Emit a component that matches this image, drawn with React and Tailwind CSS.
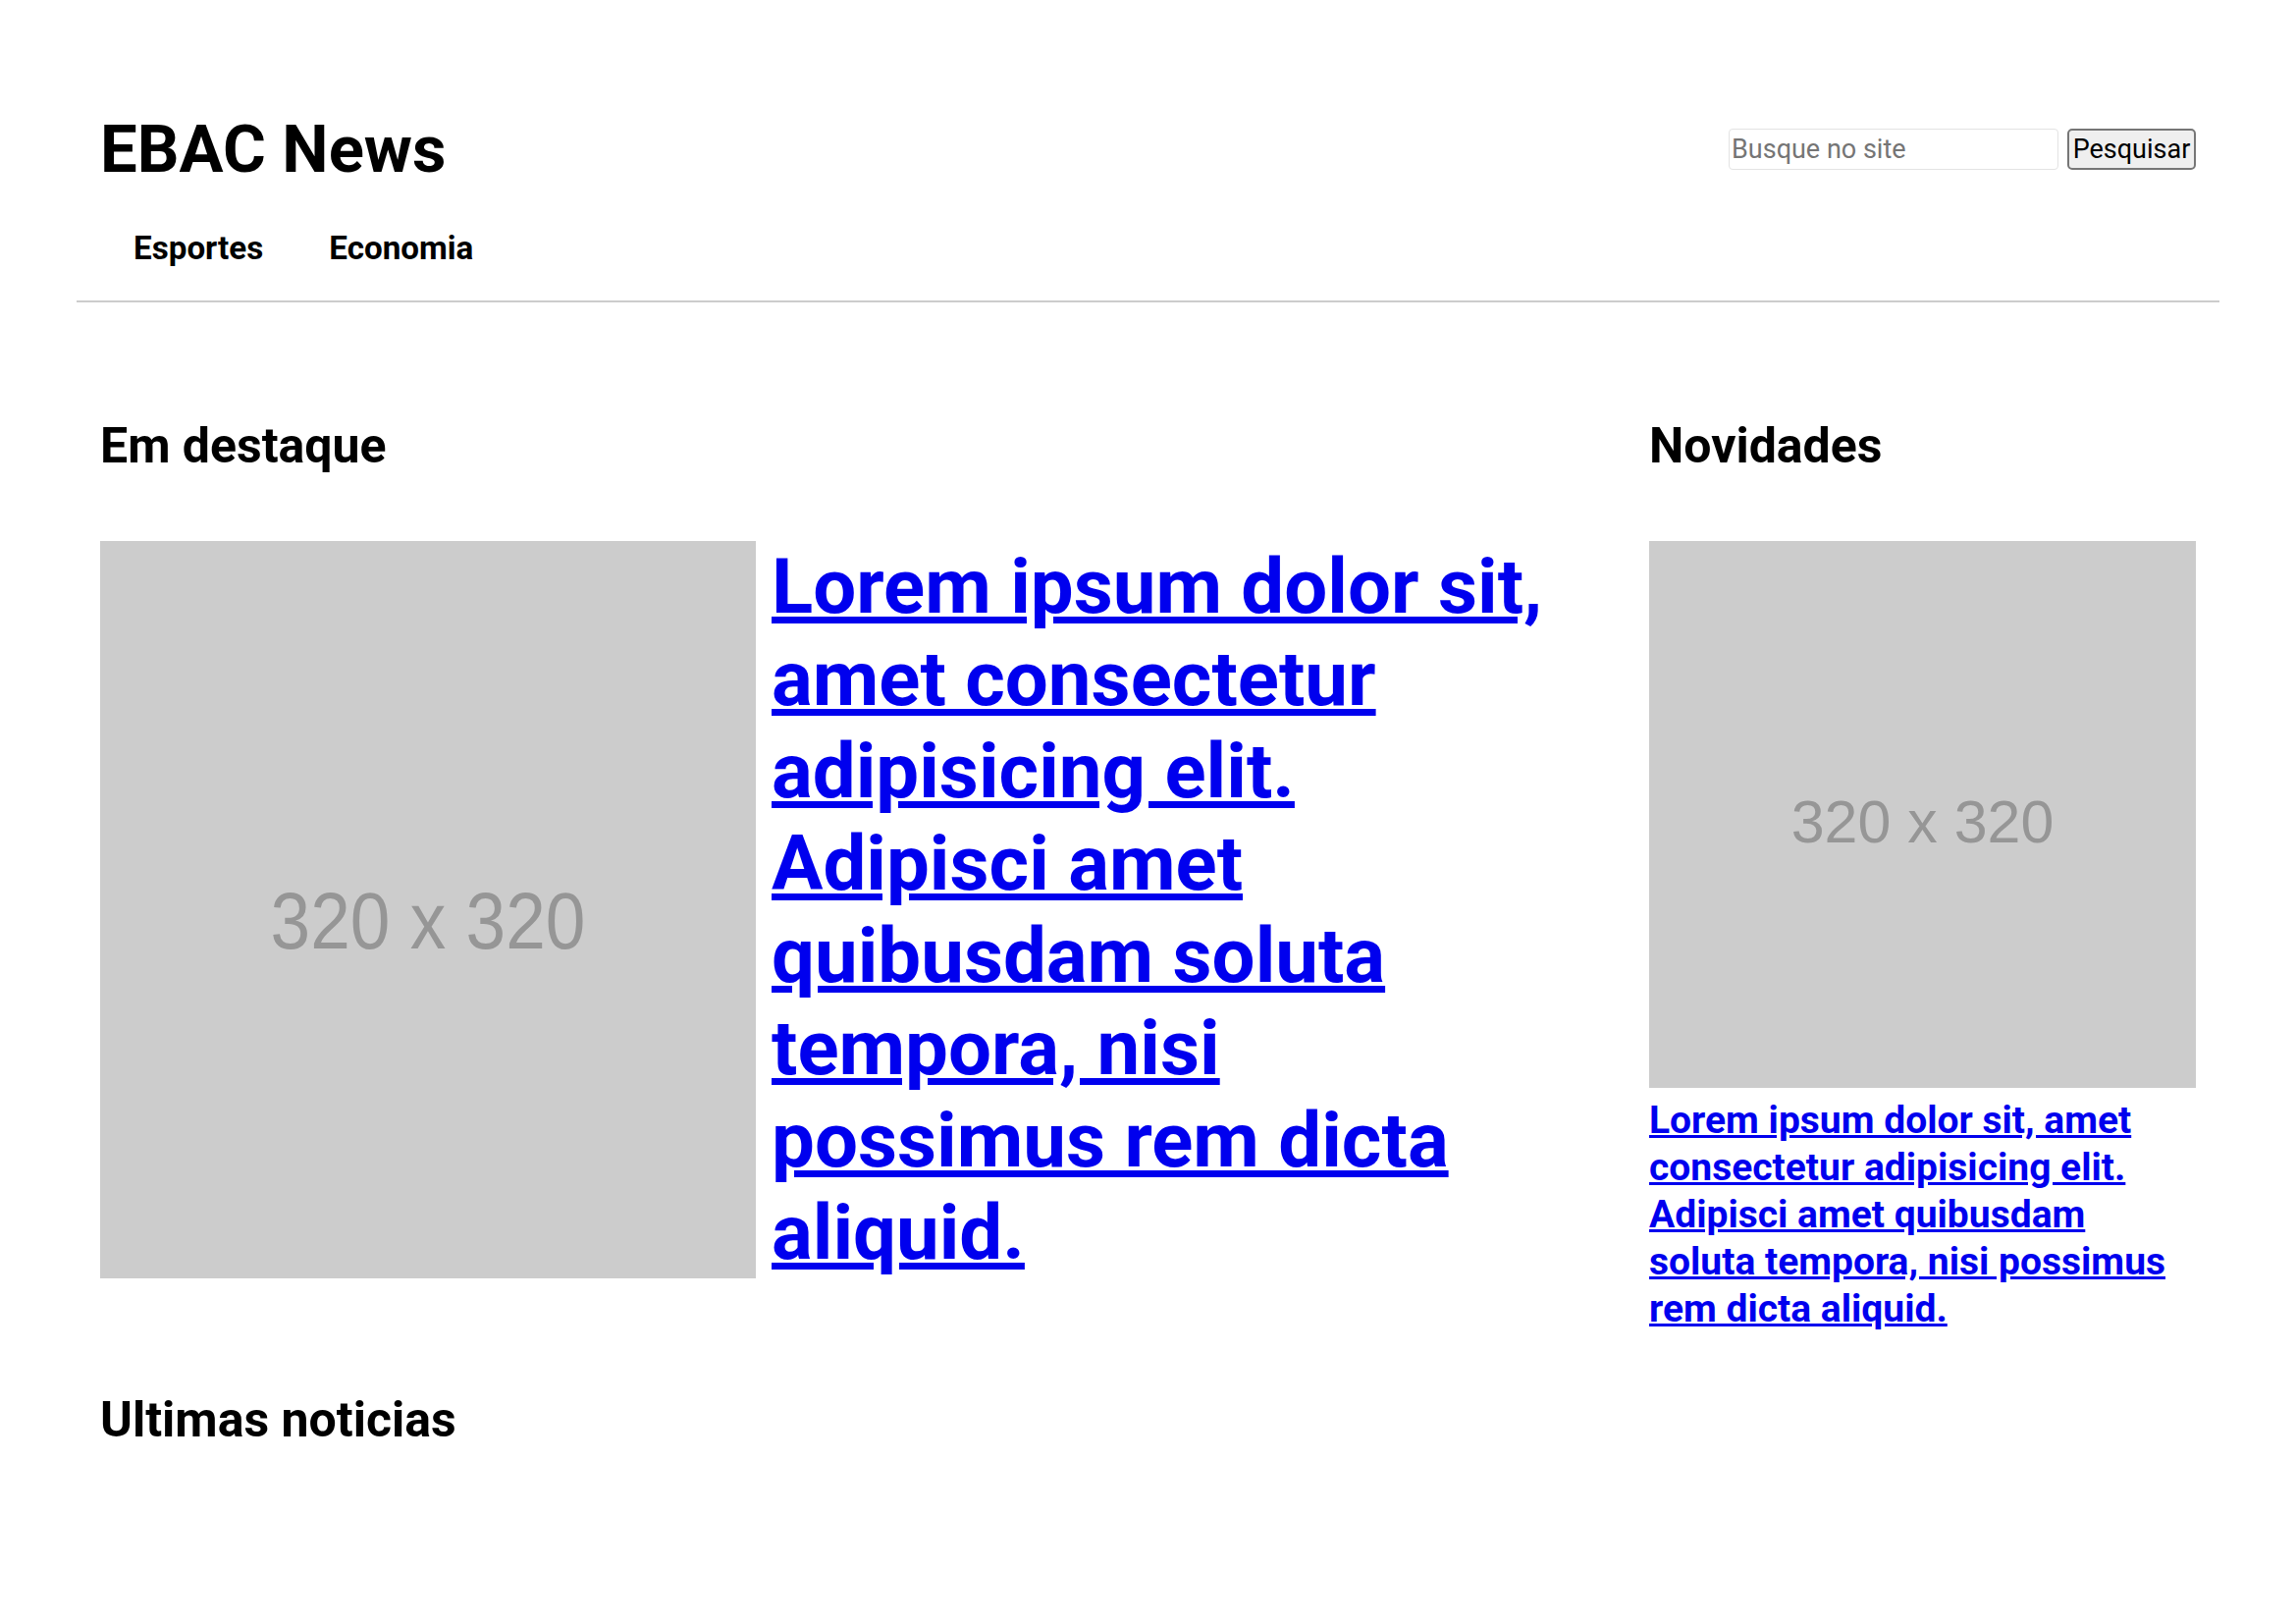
import React from "react";

function Placeholder({ className }) {
  return (
    <svg
      className={className}
      viewBox="0 0 320 320"
      preserveAspectRatio="none"
      xmlns="http://www.w3.org/2000/svg"
    >
      <rect width="320" height="320" fill="#cccccc" />
      <text
        x="160"
        y="164.5"
        textAnchor="middle"
        dominantBaseline="central"
        fill="#969696"
        fontFamily="'Liberation Sans', Arial, sans-serif"
        fontSize="35"
      >
        320 x 320
      </text>
    </svg>
  );
}

export default function App() {
  return (
    <div className="min-h-[1653px] bg-white font-['Roboto',sans-serif] text-black">
      <div className="px-[78px]">
        <header className="border-b-2 border-[#cccccc] px-[24px] pt-[113px] pb-[34px]">
          <div className="flex items-center justify-between">
            <h1 className="text-[67px] font-bold leading-[78px]">EBAC News</h1>
            <form className="flex items-center gap-[9px]" onSubmit={(e) => e.preventDefault()}>
              <input
                type="text"
                placeholder="Busque no site"
                className="h-[42px] w-[336px] rounded-[4px] border border-[#e3e3e3] px-[2px] text-[27px] placeholder:text-[#757575] outline-none"
              />
              <button
                type="submit"
                className="h-[42px] w-[131px] rounded-[5px] border-2 border-[#767676] bg-[#efefef] text-[27px] leading-none"
              >
                Pesquisar
              </button>
            </form>
          </div>
          <nav className="mt-[42px]">
            <ul className="flex">
              <li className="px-[34px]">
                <a href="#" className="text-[33.2px] font-bold leading-[39px]">Esportes</a>
              </li>
              <li className="px-[33px]">
                <a href="#" className="text-[33.2px] font-bold leading-[39px]">Economia</a>
              </li>
            </ul>
          </nav>
        </header>

        <main className="px-[24px] pt-[117px]">
          <div className="grid grid-cols-[1fr_557px] gap-x-[60px]">
            <section>
              <h2 className="text-[50px] font-bold leading-[59px]">Em destaque</h2>
              <div className="mt-[67px] flex items-start gap-[16px]">
                <Placeholder className="block h-[751px] w-[668px] shrink-0" />
                <a
                  href="#"
                  className="w-[795px] text-[78px] font-bold leading-[94px] text-[#0000ee] underline"
                >
                  Lorem ipsum dolor sit, amet consectetur adipisicing elit. Adipisci amet quibusdam soluta tempora, nisi possimus rem dicta aliquid.
                </a>
              </div>
            </section>
            <aside>
              <h2 className="text-[50px] font-bold leading-[59px]">Novidades</h2>
              <div className="mt-[67px]">
                <Placeholder className="block h-[557px] w-[557px]" />
                <a
                  href="#"
                  className="mt-[9px] block text-[39px] font-bold leading-[48px] text-[#0000ee] underline"
                >
                  Lorem ipsum dolor sit, amet consectetur adipisicing elit. Adipisci amet quibusdam soluta tempora, nisi possimus rem dicta aliquid.
                </a>
              </div>
            </aside>
          </div>
          <section className="mt-[60px]">
            <h2 className="text-[50px] font-bold leading-[59px]">Ultimas noticias</h2>
          </section>
        </main>
      </div>
    </div>
  );
}
